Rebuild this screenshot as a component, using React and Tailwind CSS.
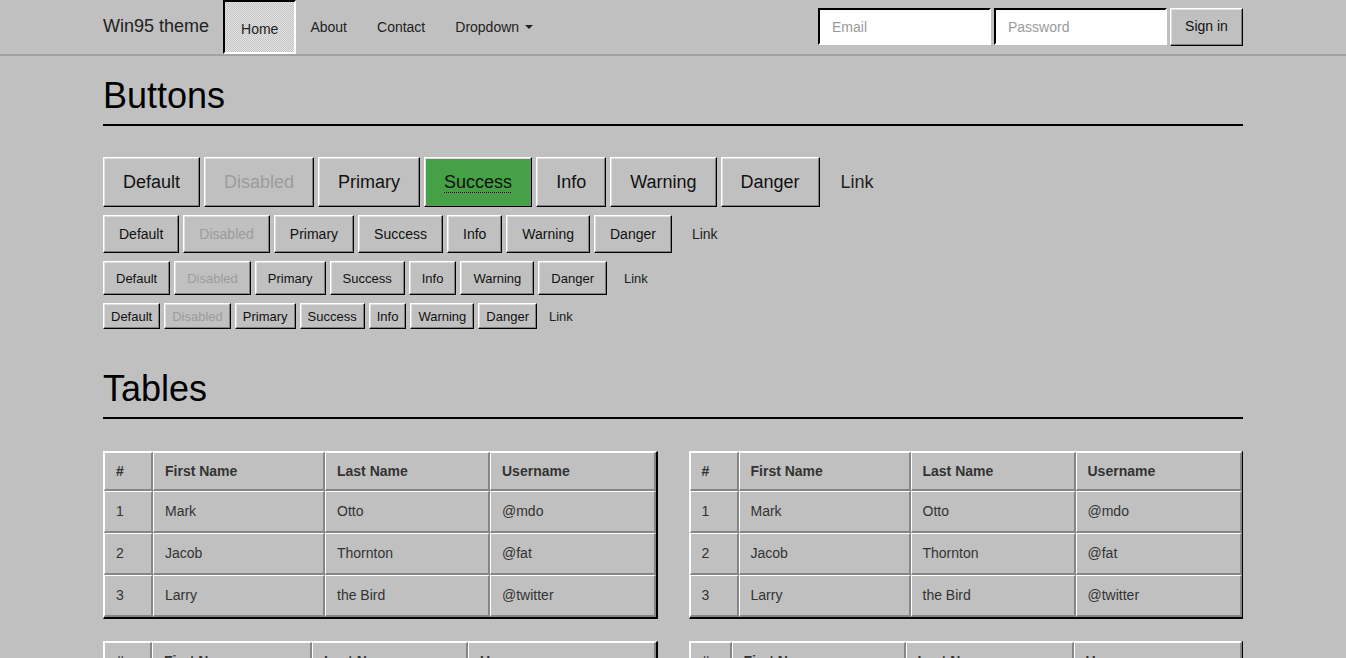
import React from 'react';

const sizes = {
  lg: 'h-[50px] px-[19px] text-[18px]',
  md: 'h-[38px] px-[15px] text-[14px]',
  sm: 'h-[34px] px-[12px] text-[13px]',
  xs: 'h-[26px] px-[7px] text-[13px]'
};

const labels = ['Default', 'Disabled', 'Primary', 'Success', 'Info', 'Warning', 'Danger'];

const bevel =
  'border border-t-white border-l-white border-b-black border-r-black shadow-[inset_-1px_-1px_#808080,inset_1px_1px_#dfdfdf]';

const Btn = ({ size, label }) => {
  const disabled = label === 'Disabled';
  const success = label === 'Success' && size === 'lg';
  return (
    <button
      type="button"
      className={`${sizes[size]} ${bevel} ${success ? 'bg-[#46a046]' : 'bg-[#c0c0c0]'} ${
        disabled ? 'text-[#9c9c9c]' : 'text-[#111]'
      } leading-none`}
    >
      <span className={success ? 'underline decoration-dotted underline-offset-[4px] decoration-1' : ''}>
        {label}
      </span>
    </button>
  );
};

const ButtonRow = ({ size }) => (
  <div className="flex gap-[4px]">
    {labels.map(l => (
      <Btn key={l} size={size} label={l} />
    ))}
    <button
      type="button"
      className={`${sizes[size]} border border-transparent text-[#222] leading-none ${size === 'lg' ? '-ml-[3px]' : ''}`}
    >
      Link
    </button>
  </div>
);

const rows = [
  ['1', 'Mark', 'Otto', '@mdo'],
  ['2', 'Jacob', 'Thornton', '@fat'],
  ['3', 'Larry', 'the Bird', '@twitter']
];

const cell =
  'border-t border-l border-t-white border-l-white border-b-2 border-r-2 border-b-[#868686] border-r-[#868686] pl-[11px] text-left align-middle';

const DataTable = ({ cols }) => (
  <div className="border-t border-l border-t-white border-l-white border-b-2 border-r-2 border-b-black border-r-black">
    <table className="w-full table-fixed border-separate border-spacing-0 text-[14px] text-[#333]">
      <thead>
        <tr>
          {['#', 'First Name', 'Last Name', 'Username'].map((h, i) => (
            <th key={h} className={`${cell} h-[39px] font-bold`} style={{ width: cols[i] }}>
              {h}
            </th>
          ))}
        </tr>
      </thead>
      <tbody>
        {rows.map(r => (
          <tr key={r[0]}>
            {r.map((c, i) => (
              <td key={i} className={`${cell} h-[42px] font-normal`}>
                {c}
              </td>
            ))}
          </tr>
        ))}
      </tbody>
    </table>
  </div>
);

const Heading = ({ children, className }) => (
  <div className={`border-b-2 border-black pb-[8px] ${className}`}>
    <h1 className="text-[36px] leading-[40px] text-black">{children}</h1>
  </div>
);

export default function App() {
  return (
    <div className="min-h-screen bg-[#c0c0c0] font-['Liberation_Sans',Arial,sans-serif] text-[#222]">
      {/* navbar */}
      <div className="h-[56px] border-b-2 border-[#a2a2a2]">
        <div className="w-[1140px] mx-auto h-full flex items-stretch">
          <div className="flex items-center text-[18px] text-[#222] pr-[14px] pb-[2px]">Win95 theme</div>
          <div className="flex items-stretch text-[14px] text-[#222]">
            <div className="flex items-center pt-[4px] px-[16px] border-2 border-t-black border-l-black border-b-white border-r-white bg-[image:repeating-conic-gradient(#c4c4c4_0%_25%,#e4e4e4_0%_50%)] bg-[length:2px_2px]">
              Home
            </div>
            <div className="flex items-center pl-[14px] pr-[15px]">About</div>
            <div className="flex items-center px-[15px]">Contact</div>
            <div className="flex items-center px-[15px]">
              Dropdown
              <span className="inline-block w-0 h-0 ml-[6px] border-x-[4px] border-x-transparent border-t-[4px] border-t-[#222]" />
            </div>
          </div>
          <div className="ml-auto flex items-center gap-[3px] pb-[1px]">
            <input
              placeholder="Email"
              className="w-[173px] h-[37px] bg-white border-2 border-t-black border-l-black border-b-white border-r-white px-[12px] text-[14px] placeholder:text-[#9a9a9a] outline-none"
            />
            <input
              placeholder="Password"
              className="w-[173px] h-[37px] bg-white border-2 border-t-black border-l-black border-b-white border-r-white px-[12px] text-[14px] placeholder:text-[#9a9a9a] outline-none"
            />
            <button type="button" className={`w-[73px] h-[38px] text-[14px] text-[#111] bg-[#c0c0c0] ${bevel}`}>
              Sign in
            </button>
          </div>
        </div>
      </div>

      <div className="w-[1140px] mx-auto">
        <Heading className="mt-[20px]">Buttons</Heading>

        <div className="mt-[31px] flex flex-col gap-[8px]">
          <ButtonRow size="lg" />
          <ButtonRow size="md" />
          <ButtonRow size="sm" />
          <ButtonRow size="xs" />
        </div>

        <Heading className="mt-[40px]">Tables</Heading>

        <div className="mt-[32px] grid grid-cols-2 gap-x-[31px] gap-y-[22px] pb-[40px]">
          <DataTable cols={[49, 172, 165, 166]} />
          <DataTable cols={[49, 172, 165, 166]} />
          <DataTable cols={[48, 160, 156, 188]} />
          <DataTable cols={[42, 174, 168, 168]} />
        </div>
      </div>
    </div>
  );
}
